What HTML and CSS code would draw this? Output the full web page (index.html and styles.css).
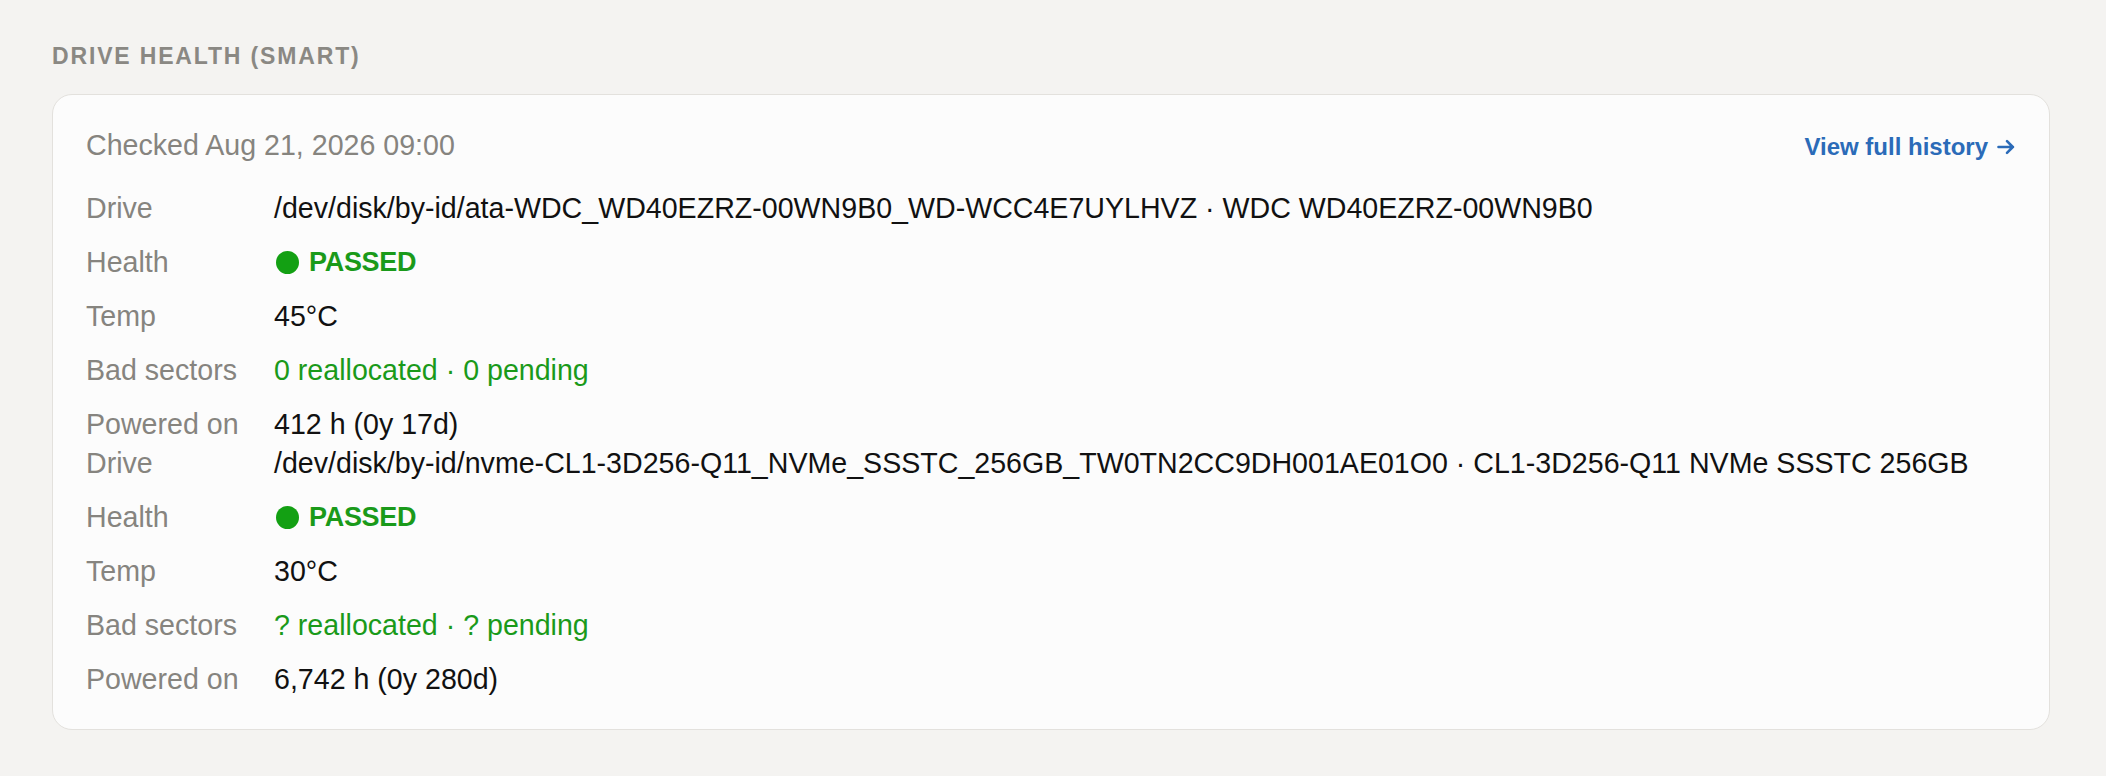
FILE: index.html
```html
<!DOCTYPE html>
<html lang="en">
<head>
<meta charset="utf-8">
<title>Drive health</title>
<link rel="stylesheet" href="styles.css">
</head>
<body>
<section class="section">
  <h2 class="section-title">Drive health (SMART)</h2>
  <div class="card">
    <div class="card-head">
      <span class="checked">Checked Aug 21, 2026 09:00</span>
      <a class="history-link" href="#">View full history<svg class="arrow" viewBox="0 0 18 16" width="18" height="16" aria-hidden="true"><path d="M1.5 8H16M10 2.2L15.8 8L10 13.8" fill="none" stroke="currentColor" stroke-width="2.6" stroke-linecap="round" stroke-linejoin="round"/></svg></a>
    </div>
    <dl class="drive">
      <dt>Drive</dt>
      <dd>/dev/disk/by-id/ata-WDC_WD40EZRZ-00WN9B0_WD-WCC4E7UYLHVZ · WDC WD40EZRZ-00WN9B0</dd>
      <dt>Health</dt>
      <dd class="ok-strong"><span class="dot"></span>PASSED</dd>
      <dt>Temp</dt>
      <dd>45°C</dd>
      <dt>Bad sectors</dt>
      <dd class="ok">0 reallocated · 0 pending</dd>
      <dt>Powered on</dt>
      <dd>412 h (0y 17d)</dd>
    </dl>
    <dl class="drive">
      <dt>Drive</dt>
      <dd>/dev/disk/by-id/nvme-CL1-3D256-Q11_NVMe_SSSTC_256GB_TW0TN2CC9DH001AE01O0 · CL1-3D256-Q11 NVMe SSSTC 256GB</dd>
      <dt>Health</dt>
      <dd class="ok-strong"><span class="dot"></span>PASSED</dd>
      <dt>Temp</dt>
      <dd>30°C</dd>
      <dt>Bad sectors</dt>
      <dd class="ok">? reallocated · ? pending</dd>
      <dt>Powered on</dt>
      <dd>6,742 h (0y 280d)</dd>
    </dl>
  </div>
</section>
</body>
</html>
```
FILE: styles.css
```css
html, body {
  margin: 0;
  padding: 0;
}
body {
  background: #f4f3f1;
  font-family: "Liberation Sans", Arial, sans-serif;
  color: #111;
}
.section {
  padding: 41px 56px 48px 52px;
}
.section-title {
  margin: 0 0 23px 0;
  font-size: 23px;
  line-height: 30px;
  font-weight: 700;
  text-transform: uppercase;
  letter-spacing: 0.08em;
  color: #8a8883;
}
.card {
  background: #fcfcfc;
  border: 1.5px solid #e3e1dd;
  border-radius: 20px;
  padding: 31px 34px 30px 33px;
}
.card-head {
  display: flex;
  justify-content: space-between;
  align-items: center;
  margin-bottom: 25px;
}
.checked {
  font-size: 28.6px;
  line-height: 38px;
  color: #86847f;
}
.history-link {
  display: inline-flex;
  align-items: center;
  gap: 9px;
  padding-top: 4px;
  font-size: 24px;
  font-weight: 700;
  color: #2b6bb8;
  text-decoration: none;
}
.arrow {
  display: block;
  flex: none;
}
.drive {
  display: grid;
  grid-template-columns: 188px 1fr;
  row-gap: 15px;
  margin: 0;
  font-size: 28.6px;
  line-height: 39px;
}
.drive dt {
  color: #86847f;
}
.drive dd {
  margin: 0;
  color: #111;
}
.drive dd.ok {
  color: #1a9a1a;
}
.drive dd.ok-strong {
  color: #1a9a1a;
  font-weight: 700;
  font-size: 27px;
  letter-spacing: -0.3px;
  display: flex;
  align-items: center;
  gap: 10px;
  padding-left: 2px;
}
.dot {
  width: 23px;
  height: 23px;
  border-radius: 50%;
  background: #13a013;
  display: inline-block;
}
```
